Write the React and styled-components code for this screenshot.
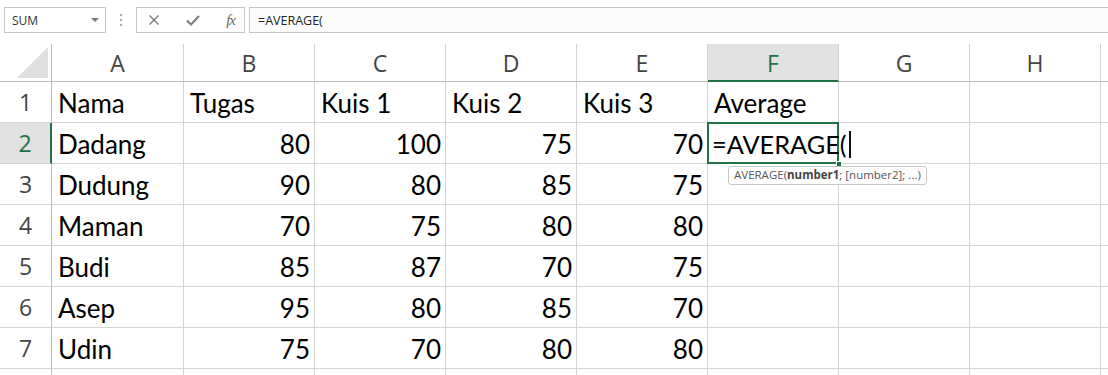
import React from "react";
import styled, { createGlobalStyle } from "styled-components";

const GREEN = "#217346";
const GRID = "#d4d4d4";

const Global = createGlobalStyle`
  html, body { margin: 0; padding: 0; background: #fff; overflow: hidden; }
  * { box-sizing: border-box; }
`;

const Page = styled.div`
  width: 1108px;
  height: 375px;
  overflow: hidden;
  background: #fff;
`;

const Toolbar = styled.div`
  display: flex;
  align-items: stretch;
  height: 44px;
  padding: 7px 0 11px 4px;
`;

const NameBox = styled.div`
  width: 102px;
  border: 1px solid #c6c6c6;
  display: flex;
  align-items: center;
  justify-content: space-between;
  padding: 0 6px 0 7px;
  font-family: "Open Sans", "Liberation Sans", sans-serif;
  font-size: 12px;
  color: #333;
`;

const Caret = styled.span`
  width: 0;
  height: 0;
  border-left: 4px solid transparent;
  border-right: 4px solid transparent;
  border-top: 4px solid #777;
`;

const Dots = styled.div`
  width: 30px;
  display: flex;
  flex-direction: column;
  align-items: center;
  justify-content: center;
  gap: 3px;
  span {
    width: 2px;
    height: 2px;
    background: #aaa;
  }
`;

const ButtonGroup = styled.div`
  width: 109px;
  border: 1px solid #c6c6c6;
  display: flex;
  align-items: center;
  justify-content: space-between;
  padding: 0 9px 0 11px;
  color: #7a7a7a;
`;

const Fx = styled.span`
  font-family: "Liberation Serif", serif;
  font-style: italic;
  font-size: 15px;
  color: #666;
  letter-spacing: -1px;
`;

const FormulaInput = styled.div`
  flex: 1;
  margin-left: 4px;
  border-top: 1px solid #c6c6c6;
  border-bottom: 1px solid #c6c6c6;
  border-left: 1px solid #c6c6c6;
  background: #fcfcfc;
  display: flex;
  align-items: center;
  padding-left: 8px;
  font-family: "Open Sans", "Liberation Sans", sans-serif;
  font-size: 12.5px;
  color: #222;
`;

const Sheet = styled.div`
  display: grid;
  grid-template-columns: 52px 132px repeat(7, 131px) 1fr;
  grid-template-rows: 38px repeat(8, 41px);
`;

const Corner = styled.div`
  border-right: 1px solid #bdbdbd;
  border-bottom: 1px solid #bdbdbd;
  position: relative;
  &::after {
    content: "";
    position: absolute;
    right: 3px;
    bottom: 3px;
    width: 0;
    height: 0;
    border-left: 31px solid transparent;
    border-bottom: 31px solid #dfdfdf;
  }
`;

const ColHead = styled.div`
  display: flex;
  align-items: center;
  justify-content: center;
  font-family: "Open Sans", "Noto Sans", sans-serif;
  font-size: 23px;
  color: ${(p) => (p.$active ? GREEN : "#444")};
  background: ${(p) => (p.$active ? "#e1e1e1" : "#fff")};
  border-right: 1px solid ${GRID};
  border-bottom: ${(p) => (p.$active ? `2px solid ${GREEN}` : "1px solid #bdbdbd")};
  padding-top: ${(p) => (p.$active ? "1px" : "0")};
`;

const RowHead = styled.div`
  display: flex;
  align-items: center;
  justify-content: center;
  font-family: "Open Sans", "Noto Sans", sans-serif;
  font-size: 23px;
  color: ${(p) => (p.$active ? GREEN : "#444")};
  background: ${(p) => (p.$active ? "#e1e1e1" : "#fff")};
  border-right: ${(p) => (p.$active ? `2px solid ${GREEN}` : "1px solid #bdbdbd")};
  border-bottom: 1px solid ${GRID};
`;

const Cell = styled.div`
  position: relative;
  display: flex;
  align-items: center;
  justify-content: ${(p) => (p.$num ? "flex-end" : "flex-start")};
  padding: 2px 4px 0 6px;
  font-family: Lato, "Liberation Sans", sans-serif;
  font-size: 26px;
  color: #000;
  white-space: nowrap;
  border-right: 1px solid ${GRID};
  border-bottom: 1px solid ${GRID};
`;

const ActiveCell = styled(Cell)`
  overflow: visible;
  z-index: 2;
  padding-left: 4px;
  font-size: 25.3px;
  &::before {
    content: "";
    position: absolute;
    z-index: -1;
    left: -1px;
    top: -1px;
    right: -1px;
    bottom: -1px;
    border: 2px solid ${GREEN};
    pointer-events: none;
  }
`;

const FillHandle = styled.span`
  position: absolute;
  right: -4px;
  bottom: -4px;
  width: 6px;
  height: 6px;
  background: ${GREEN};
  border: 1px solid #fff;
`;

const Cursor = styled.span`
  flex-shrink: 0;
  display: inline-block;
  width: 2px;
  height: 27px;
  background: #111;
  margin-left: 2px;
`;

const Tip = styled.div`
  position: absolute;
  left: 20px;
  top: calc(100% + 3px);
  z-index: 3;
  background: #fff;
  border: 1px solid #c8c8c8;
  border-radius: 3px;
  padding: 1px 5px 2px;
  font-family: "Open Sans", "Liberation Sans", sans-serif;
  font-size: 11.5px;
  line-height: 14px;
  color: #555;
  white-space: nowrap;
  b { color: #444; }
`;

const Cross = () => (
  <svg width="12" height="12" viewBox="0 0 12 12">
    <path d="M1.5 1.5 L10.5 10.5 M10.5 1.5 L1.5 10.5" stroke="#7a7a7a" strokeWidth="1.4" fill="none" />
  </svg>
);

const Check = () => (
  <svg width="14" height="12" viewBox="0 0 14 12">
    <path d="M1 6.5 L5 10.5 L13 2" stroke="#7a7a7a" strokeWidth="2" fill="none" />
  </svg>
);

const cols = ["A", "B", "C", "D", "E", "F", "G", "H", ""];
const rows = [
  ["Nama", "Tugas", "Kuis 1", "Kuis 2", "Kuis 3", "Average"],
  ["Dadang", 80, 100, 75, 70],
  ["Dudung", 90, 80, 85, 75],
  ["Maman", 70, 75, 80, 80],
  ["Budi", 85, 87, 70, 75],
  ["Asep", 95, 80, 85, 70],
  ["Udin", 75, 70, 80, 80],
  [],
];

const App = () => {
  return (
    <Page>
      <Global />
      <Toolbar>
        <NameBox>
          SUM <Caret />
        </NameBox>
        <Dots>
          <span />
          <span />
          <span />
        </Dots>
        <ButtonGroup>
          <Cross />
          <Check />
          <Fx>fx</Fx>
        </ButtonGroup>
        <FormulaInput>=AVERAGE(</FormulaInput>
      </Toolbar>
      <Sheet>
        <Corner />
        {cols.map((c, i) => (
          <ColHead key={i} $active={c === "F"}>
            {c}
          </ColHead>
        ))}
        {rows.map((r, ri) => (
          <React.Fragment key={ri}>
            <RowHead $active={ri === 1}>{ri < 7 ? ri + 1 : ""}</RowHead>
            {cols.map((c, ci) => {
              if (ri === 1 && ci === 5) {
                return (
                  <ActiveCell key={ci}>
                    =AVERAGE(
                    <Cursor />
                    <FillHandle />
                    <Tip>
                      AVERAGE(<b>number1</b>; [number2]; ...)
                    </Tip>
                  </ActiveCell>
                );
              }
              const v = r[ci];
              return (
                <Cell key={ci} $num={typeof v === "number"}>
                  {v}
                </Cell>
              );
            })}
          </React.Fragment>
        ))}
      </Sheet>
    </Page>
  );
};

export default App;
